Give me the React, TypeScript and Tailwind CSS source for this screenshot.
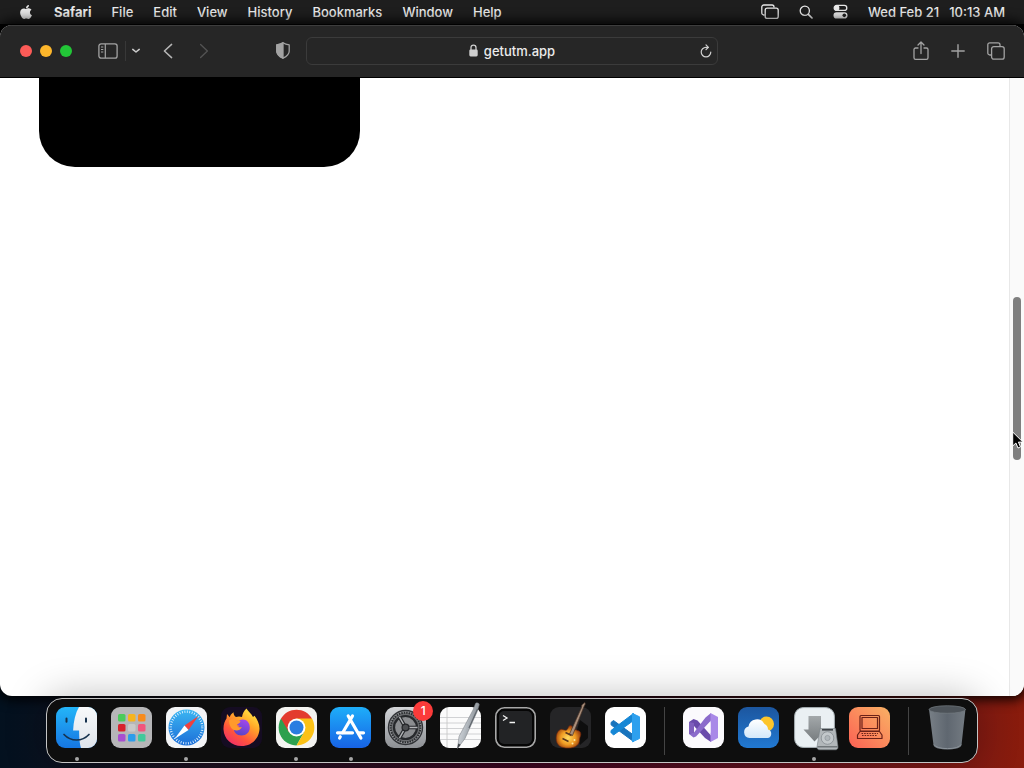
import type { ReactNode } from 'react';
import { FaApple } from 'react-icons/fa';

// =============================================================================
// DATA
// =============================================================================
const MENUS = ['File', 'Edit', 'View', 'History', 'Bookmarks', 'Window', 'Help'];

// Scroll position of the page, in percent of the track
const SCROLL = { top: 35.4, height: 26.4 };

// =============================================================================
// MENU BAR AND TOOLBAR ICONS
// =============================================================================
const StackIcon = () => (
  <svg width="18" height="16" viewBox="0 0 18 16" fill="none" stroke="#e8e8e8" strokeWidth="1.3">
    <path d="M3.6 11H2.8A2 2 0 0 1 .8 9V3A2 2 0 0 1 2.8 1H11a2 2 0 0 1 2 2v.6" />
    <rect x="4.2" y="4.2" width="13" height="10.2" rx="2" />
  </svg>
);

const SearchIcon = () => (
  <svg width="14" height="14" viewBox="0 0 14 14" fill="none" stroke="#e8e8e8" strokeLinecap="round">
    <circle cx="5.8" cy="5.8" r="4.6" strokeWidth="1.3" />
    <path d="m9.3 9.3 3.7 3.7" strokeWidth="1.7" />
  </svg>
);

const ControlCenterIcon = () => (
  <svg width="15" height="15" viewBox="0 0 15 15">
    <rect x="1.2" y="1.4" width="12.6" height="5" rx="2.5" fill="none" stroke="#e8e8e8" strokeWidth="1.3" />
    <circle cx="3.8" cy="3.9" r="2.6" fill="#e8e8e8" />
    <rect x=".5" y="8.2" width="14" height="6.3" rx="3.1" fill="#e8e8e8" />
    <circle cx="11.3" cy="11.35" r="1.8" fill="#1f1f1f" />
  </svg>
);

const SidebarIcon = () => (
  <svg width="20" height="16" viewBox="0 0 20 16" fill="none" stroke="#a3a3a3">
    <rect x=".9" y=".9" width="18.2" height="14.2" rx="2.2" strokeWidth="1.3" />
    <path d="M7.3 1v14" strokeWidth="1.2" />
    <path d="M3 4h2.3M3 6.5h2.3M3 9h2.3" />
  </svg>
);

const ChevronDownIcon = () => (
  <svg width="10" height="6" viewBox="0 0 10 6" fill="none" stroke="#c9c9c9" strokeWidth="1.6" strokeLinecap="round" strokeLinejoin="round">
    <path d="m1.8 1.4 3.2 2.6 3.2-2.6" />
  </svg>
);

const BackIcon = () => (
  <svg width="10" height="16" viewBox="0 0 10 16" fill="none" stroke="currentColor" strokeWidth="1.5" strokeLinecap="round" strokeLinejoin="round">
    <path d="M8.6 1.4 1.4 8l7.2 6.6" />
  </svg>
);

const ForwardIcon = () => (
  <svg width="10" height="16" viewBox="0 0 10 16" fill="none" stroke="currentColor" strokeWidth="1.4" strokeLinecap="round" strokeLinejoin="round">
    <path d="M1.6 1.6 8.4 8l-6.8 6.4" />
  </svg>
);

const ShieldIcon = () => (
  <svg width="14" height="17" viewBox="0 0 14 17" stroke="#a3a3a3" strokeWidth="1.3" strokeLinejoin="round">
    <path d="M7 .8c1.6 1.1 3.8 1.8 6.2 2v6.4c0 3-2.6 5.2-6.2 7-3.6-1.8-6.2-4-6.2-7V2.8C3.2 2.6 5.4 1.9 7 .8Z" fill="none" />
    <path d="M7 .8v15.4c-3.6-1.8-6.2-4-6.2-7V2.8C3.2 2.6 5.4 1.9 7 .8Z" fill="#a3a3a3" />
  </svg>
);

const LockIcon = () => (
  <svg width="9" height="13" viewBox="0 0 9 13">
    <path d="M2 6V3.6a2.5 2.5 0 0 1 5 0V6" fill="none" stroke="#cfcfcf" strokeWidth="1.3" />
    <rect x=".3" y="5.4" width="8.4" height="7" rx="1.3" fill="#cfcfcf" />
  </svg>
);

const ReloadIcon = () => (
  <svg width="12" height="14" viewBox="0 0 12 14" fill="none" stroke="#d0d0d0" strokeWidth="1.2" strokeLinecap="round" strokeLinejoin="round">
    <path d="M8.2 3.3H6a4.8 4.8 0 1 0 4.8 4.8" />
    <path d="M6 .9 8.4 3.3 6 5.7" />
  </svg>
);

const ShareIcon = () => (
  <svg width="16" height="20" viewBox="0 0 16 20" fill="none" stroke="#a3a3a3" strokeWidth="1.3" strokeLinecap="round" strokeLinejoin="round">
    <path d="M5 7H2.6A1.6 1.6 0 0 0 1 8.6v8.2a1.6 1.6 0 0 0 1.6 1.6h10.8a1.6 1.6 0 0 0 1.6-1.6V8.6A1.6 1.6 0 0 0 13.4 7H11" />
    <path d="M8 12.5V1.2M5 4l3-3 3 3" />
  </svg>
);

const PlusIcon = () => (
  <svg width="14" height="14" viewBox="0 0 14 14" stroke="#a3a3a3" strokeWidth="1.4" strokeLinecap="round">
    <path d="M7 .8v12.4M.8 7h12.4" />
  </svg>
);

const TabsIcon = () => (
  <svg width="18" height="18" viewBox="0 0 18 18" fill="none" stroke="#a3a3a3" strokeWidth="1.3">
    <path d="M4.4 13H2.8A2 2 0 0 1 .8 11V2.8a2 2 0 0 1 2-2H11a2 2 0 0 1 2 2v1.6" />
    <rect x="4.6" y="4.6" width="12.6" height="12.6" rx="2.2" />
  </svg>
);

const CursorIcon = () => (
  <svg width="12" height="19" viewBox="0 0 12 19" className="absolute bottom-2.5 -left-px">
    <path d="M.7 1v14l3.2-3 2.1 5 2.5-1.1-2.1-4.8h4.5Z" fill="#000" stroke="#fff" strokeWidth="1" />
  </svg>
);

// =============================================================================
// DOCK ICONS (41 x 41)
// =============================================================================
const Tile = ({ children }: { children: ReactNode }) => (
  <svg width="41" height="41" viewBox="0 0 41 41" className="block overflow-visible">
    {children}
  </svg>
);

const FinderIcon = () => (
  <Tile>
    <defs>
      <linearGradient id="finder" x1="0" y1="0" x2="0" y2="1">
        <stop offset="0" stopColor="#24b5f8" />
        <stop offset="1" stopColor="#1676e2" />
      </linearGradient>
      <linearGradient id="finderFace" x1="0" y1="0" x2="0" y2="1">
        <stop offset="0" stopColor="#f8f9fb" />
        <stop offset="1" stopColor="#dfe4ea" />
      </linearGradient>
    </defs>
    <rect width="41" height="41" rx="9" fill="url(#finder)" />
    <path d="M23 0h9a9 9 0 0 1 9 9v23a9 9 0 0 1-9 9h-7c-1.2-4-1.8-9-1.9-17.5h-6C17.5 14 19.5 6 23 0Z" fill="url(#finderFace)" />
    <path d="M10.5 11.5v3.2M30 11.5v3.2" stroke="#17324e" strokeWidth="2" strokeLinecap="round" />
    <path d="M8 27.5c7 7.3 18 7.3 25 0" fill="none" stroke="#17324e" strokeWidth="1.7" strokeLinecap="round" />
  </Tile>
);

const LAUNCHPAD_COLORS = ['#4bcb5b', '#f6b41f', '#f78b1d', '#d8222c', '#c9c9c9', '#f2557c', '#a84fd0', '#2d9cea', '#42c99b'];

const LaunchpadIcon = () => (
  <Tile>
    <rect width="41" height="41" rx="9" fill="#b6b6b8" />
    {LAUNCHPAD_COLORS.map((color, i) => (
      <rect key={color} x={7 + (i % 3) * 10} y={7 + Math.floor(i / 3) * 10} width="7.5" height="7.5" rx="1.6" fill={color} />
    ))}
  </Tile>
);

const SafariIcon = () => (
  <Tile>
    <defs>
      <linearGradient id="safari" x1="0" y1="0" x2="0" y2="1">
        <stop offset="0" stopColor="#3bb6f2" />
        <stop offset="1" stopColor="#1d6fd8" />
      </linearGradient>
    </defs>
    <rect width="41" height="41" rx="9" fill="#f3f4f6" />
    <circle cx="20.5" cy="20.5" r="18" fill="url(#safari)" />
    <circle cx="20.5" cy="20.5" r="15.8" fill="none" stroke="#e9f5ff" strokeWidth="2.4" strokeDasharray=".8 1.68" />
    <path d="m32.5 9-10 14-4-4.5Z" fill="#f0403d" />
    <path d="m8.5 32 10-13.5 4 4.5Z" fill="#fff" />
  </Tile>
);

const FirefoxIcon = () => (
  <Tile>
    <defs>
      <linearGradient id="firefox" x1=".85" y1="0" x2=".2" y2="1">
        <stop offset="0" stopColor="#fff04a" />
        <stop offset=".35" stopColor="#ffa928" />
        <stop offset=".7" stopColor="#ff543c" />
        <stop offset="1" stopColor="#ef2c6c" />
      </linearGradient>
      <linearGradient id="firefoxGlobe" x1=".7" y1="0" x2=".3" y2="1">
        <stop offset="0" stopColor="#a347ed" />
        <stop offset="1" stopColor="#5645c5" />
      </linearGradient>
    </defs>
    <rect width="41" height="41" rx="9" fill="#150c22" />
    <path d="M25.5 1.5c1.5 2.8 4.8 5 6.5 8.5l1.5-1.2c3.2 4.2 5.8 9.5 4.8 15.2-1.4 8.6-8.3 15-17.8 15C10.5 39 3 32 2.5 22.5 2.3 17 4 13.5 5.5 11.5L6 7l2.8 3.2c.5-2 1.5-3.5 3.7-5 0 2 .8 3.8 2.5 4.8 2-.7 4-.7 6 0 .5-3.5 2-6.5 4.5-8.5Z" fill="url(#firefox)" />
    <path d="M19 13c5.5-2 9.8 2 9.8 7.5 0 4.8-3.6 8-8.2 8-5 0-8-3.5-8-7.5 2 .5 4.2-.2 6.2-2.2-2-.2-3.2-1-3.7-2.8 1.4-.2 2.7-1.2 3.9-3Z" fill="url(#firefoxGlobe)" />
    <path d="M8 13.5c2.3-1.6 5-1.6 7-.4 1.3.7 3 1.2 4.6 1.2-.4 2-3.2 2.5-4 4.2 1.2 2 3.6 2 5.4 1.5-1.8 3.6-5.2 4-8 3-2.8-1.2-4.6-4-5-9.5Z" fill="#ff9a2b" />
  </Tile>
);

const ChromeIcon = () => (
  <Tile>
    <rect width="41" height="41" rx="9" fill="#f3f3f1" />
    <path d="m20.5 20.5 7.7 4.5-7.7 13.4A17.9 17.9 0 0 1 5 11.6Z" fill="#2da04e" />
    <path d="M20.5 11.6H36L20.5 20.5 12.8 25 5 11.6a17.9 17.9 0 0 1 31 0Z" fill="#e33b2e" />
    <path d="M20.5 11.6H36a17.9 17.9 0 0 1-15.5 26.8L28.2 25Z" fill="#fbc116" />
    <circle cx="20.5" cy="20.5" r="8.9" fill="#fff" />
    <circle cx="20.5" cy="20.5" r="7" fill="#2a7de1" />
  </Tile>
);

const AppStoreIcon = () => (
  <Tile>
    <defs>
      <linearGradient id="appStore" x1="0" y1="0" x2="0" y2="1">
        <stop offset="0" stopColor="#1eaef9" />
        <stop offset="1" stopColor="#1763e6" />
      </linearGradient>
    </defs>
    <rect width="41" height="41" rx="9" fill="url(#appStore)" />
    <g stroke="#fff" strokeWidth="3.2" strokeLinecap="round">
      <path d="m22.5 9-9.7 16.5M10.3 29.8 9.6 31M18.2 9l12.7 22" />
      <path d="M7.5 25.8h15M28.5 25.8h5" />
    </g>
  </Tile>
);

const SettingsIcon = () => (
  <Tile>
    <defs>
      <linearGradient id="settings" x1="0" y1="0" x2="0" y2="1">
        <stop offset="0" stopColor="#d3d5d8" />
        <stop offset="1" stopColor="#8d9094" />
      </linearGradient>
    </defs>
    <rect width="41" height="41" rx="9" fill="url(#settings)" />
    <circle cx="20.5" cy="20.5" r="17" fill="#9a9c9f" stroke="#303236" strokeWidth="1.4" />
    <circle cx="20.5" cy="20.5" r="14.8" fill="#6a6c6f" stroke="#2a2c2f" strokeWidth="2" strokeDasharray="1.5 1" />
    <circle cx="20.5" cy="20.5" r="11.5" fill="#8b8d90" stroke="#27292c" strokeWidth="2.2" />
    <path d="M20.5 20.5h11M20.5 20.5 15 11M20.5 20.5 15 30" stroke="#27292c" strokeWidth="3.6" />
    <path d="M20.5 20.5h12M20.5 20.5l-6-10.5M20.5 20.5l-6 10.5" stroke="#b2b4b7" strokeWidth="1.5" />
    <circle cx="20.5" cy="20.5" r="3.4" fill="#4c4e51" stroke="#25272a" strokeWidth="1.3" />
  </Tile>
);

const TextEditIcon = () => (
  <Tile>
    <defs>
      <linearGradient id="pen" x1="0" y1="0" x2="1" y2="0.5">
        <stop offset="0" stopColor="#eef0f2" />
        <stop offset=".5" stopColor="#b9bfc5" />
        <stop offset="1" stopColor="#70767c" />
      </linearGradient>
    </defs>
    <rect width="41" height="41" rx="9" fill="#fbfbfb" />
    <path d="M0 10.5h41M0 16h41M0 21.5h41M0 27h41M0 32.5h41" stroke="#c6c8ca" strokeWidth=".8" />
    <path d="M7 1v39" stroke="#c4c4c4" strokeWidth=".8" />
    <path d="M35.5-3.5c1-1.5 4-.3 3.8 1.3L37 5 25 31.5 17.5 41.5l1.5-12L33 3Z" fill="url(#pen)" stroke="#74797f" strokeWidth=".5" />
    <path d="m18.2 36.5-1 5.5 3.5-4.2Z" fill="#42464b" />
    <path d="M37.5 2 29 21" stroke="#5f656c" strokeWidth="1.1" />
  </Tile>
);

const TerminalIcon = () => (
  <Tile>
    <rect x=".8" y=".8" width="39.4" height="39.4" rx="8.6" fill="#050505" stroke="#a8a8a8" strokeWidth="1.6" />
    <rect x="4" y="4" width="33" height="33" rx="5" fill="#222325" />
    <path d="m8 8.5 4 2.5-4 2.5M14.5 15.5H20" fill="none" stroke="#f4f4f4" strokeWidth="1.3" />
  </Tile>
);

const GarageBandIcon = () => (
  <Tile>
    <defs>
      <radialGradient id="guitar" cx=".48" cy=".55" r=".6">
        <stop offset="0" stopColor="#ffdc62" />
        <stop offset=".5" stopColor="#f09a22" />
        <stop offset="1" stopColor="#7e2409" />
      </radialGradient>
    </defs>
    <rect width="41" height="41" rx="9" fill="#252527" />
    <path d="m30 13-4 13 4 12 8-7V19Z" fill="#0e0e0e" />
    <path d="M9.5 23c2.5-2 4.5 1 7 0 2.2-1 1.5-4.5 4-4.5 1.8 0 2 2.2 3.5 3.5 1.8 1.5 5.5 1 6.5 3.5s-.5 4-.8 6c-.3 2.5-.2 5-2.7 7-4 3.3-13 3.5-17.5.5-4.5-3.2-4.5-12.5 0-16Z" fill="url(#guitar)" stroke="#6e250b" strokeWidth=".6" />
    <path d="m19.5 27 12-26.5.3-2.5 3-2.5.5 1.5-1.5 3L22.5 28.5Z" fill="#a88f7c" stroke="#4a3428" strokeWidth=".7" />
    <path d="m15.5 25.5 6 3M12.5 31.5l6 3" stroke="#59351c" strokeWidth="1.5" />
    <circle cx="24.5" cy="33" r="1" fill="#fbe7a8" />
    <circle cx="22.5" cy="36.5" r="1" fill="#fbe7a8" />
  </Tile>
);

const VsCodeIcon = () => (
  <Tile>
    <rect width="41" height="41" rx="9" fill="#fff" />
    <path d="m6 15.5 2.5-2L28.5 28v6.5L6.2 18Z" fill="#1874bd" stroke="#1874bd" strokeWidth="1" strokeLinejoin="round" />
    <path d="M28.5 6.5V13.5L8.5 28 6 25.5v-2Z" fill="#1687d5" stroke="#1687d5" strokeWidth="1" strokeLinejoin="round" />
    <path d="m27.5 6.5 7 3.3v21.7l-7 3.3Z" fill="#2da0ee" stroke="#2da0ee" strokeLinejoin="round" />
  </Tile>
);

const VisualStudioIcon = () => (
  <Tile>
    <rect width="41" height="41" rx="9" fill="#fbfafd" />
    <path d="m6 15 4.5-3 4 1.5L28 28.5v6.5L22 31 11 19v8L6 27Z" fill="#6a4bab" />
    <path d="m6 15 5 1v9.5L6 27Z" fill="#7f5fbd" />
    <path d="M28 6v7.5L13 29.5 10.5 30.5 6 27 11 25.5 22.5 10.5Z" fill="#8b6bcb" />
    <path d="m27.5 6 7.5 4v21l-7.5 4Z" fill="#a989e8" />
    <path d="M27.5 15v11l-5.5-5.5Z" fill="#fbfafd" />
  </Tile>
);

const WeatherIcon = () => (
  <Tile>
    <defs>
      <linearGradient id="weather" x1="0" y1="0" x2="0" y2="1">
        <stop offset="0" stopColor="#1c569f" />
        <stop offset="1" stopColor="#2179d2" />
      </linearGradient>
      <linearGradient id="cloud" x1="0" y1="0" x2="0" y2="1">
        <stop offset="0" stopColor="#fff" />
        <stop offset="1" stopColor="#d3e8fa" />
      </linearGradient>
    </defs>
    <rect width="41" height="41" rx="9" fill="url(#weather)" />
    <circle cx="28.5" cy="17" r="7.5" fill="#fdc52a" />
    <path d="M11.5 31a5.8 5.8 0 0 1-1-11.4 8.5 8.5 0 0 1 16-2.5 6 6 0 0 1 3.5 5.4 4.4 4.4 0 0 1 0 8.5Z" fill="url(#cloud)" />
  </Tile>
);

const InstallerIcon = () => (
  <Tile>
    <defs>
      <linearGradient id="arrow" x1="0" y1="0" x2="0" y2="1">
        <stop offset="0" stopColor="#a3a8aa" />
        <stop offset="1" stopColor="#777c7f" />
      </linearGradient>
    </defs>
    <rect x=".6" y=".6" width="39.8" height="39.8" rx="8.6" fill="#eaf0f3" stroke="#a6afb3" strokeWidth="1" />
    <path d="M14.5 9H27v13.5h5L20.5 34.5 9.5 22.5h5Z" fill="url(#arrow)" />
    <path d="M26 21.5h15.5L44 40c0 1.8-1 2.8-2.5 2.8H25.5c-1.6 0-2.5-1-2.5-2.8Z" fill="#b2b7ba" stroke="#777f84" strokeWidth=".6" />
    <path d="M28 22.8h11" stroke="#3d4246" strokeWidth="1.6" />
    <circle cx="33.5" cy="31" r="6.3" fill="#c3c8cb" stroke="#858c91" strokeWidth=".8" />
    <circle cx="33.5" cy="31" r="2.6" fill="#b0b6ba" stroke="#8a9196" strokeWidth=".6" />
    <path d="M23.5 39.8H43.5" stroke="#62686c" strokeWidth="1.2" />
  </Tile>
);

const LaptopIcon = () => (
  <Tile>
    <defs>
      <linearGradient id="laptop" x1="1" y1="0" x2="0" y2="1">
        <stop offset="0" stopColor="#f8b164" />
        <stop offset=".5" stopColor="#fb8a5c" />
        <stop offset="1" stopColor="#fb6053" />
      </linearGradient>
    </defs>
    <rect width="41" height="41" rx="9" fill="url(#laptop)" />
    <g fill="none" stroke="#6b2118" strokeWidth="1.2" strokeLinejoin="round">
      <rect x="11" y="8.5" width="19.5" height="15.5" rx="1" />
      <rect x="13" y="10.5" width="15.5" height="11" />
      <path d="M11 24.5 8.5 28v3.5H33V28l-2.5-3.5Z" />
      <path d="M12.5 26.5h16.5M13 28.5h15.5" strokeDasharray="1.6 1" />
    </g>
  </Tile>
);

const TrashIcon = () => (
  <Tile>
    <defs>
      <linearGradient id="trash" x1="0" y1="0" x2="1" y2="0">
        <stop offset="0" stopColor="#787f86" />
        <stop offset=".5" stopColor="#5f6770" />
        <stop offset="1" stopColor="#747b82" />
      </linearGradient>
    </defs>
    <path d="M2 2h36.5L34.5 38c-.4 6-27.5 6-28 0Z" fill="url(#trash)" />
    <path d="M7 37.5c2 5.5 25 5.5 27 0" fill="none" stroke="#8b939a" strokeWidth="1" />
    <ellipse cx="20.25" cy="2.5" rx="18.2" ry="3.8" fill="#4d5359" stroke="#747b81" strokeWidth=".7" />
  </Tile>
);

type DockApp = { name: string; icon: ReactNode; running?: boolean; badge?: number };

const PINNED_APPS: DockApp[] = [
  { name: 'Finder', icon: <FinderIcon />, running: true },
  { name: 'Launchpad', icon: <LaunchpadIcon /> },
  { name: 'Safari', icon: <SafariIcon />, running: true },
  { name: 'Firefox', icon: <FirefoxIcon /> },
  { name: 'Chrome', icon: <ChromeIcon />, running: true },
  { name: 'App Store', icon: <AppStoreIcon />, running: true },
  { name: 'System Settings', icon: <SettingsIcon />, badge: 1 },
  { name: 'TextEdit', icon: <TextEditIcon /> },
  { name: 'Terminal', icon: <TerminalIcon /> },
  { name: 'GarageBand', icon: <GarageBandIcon /> },
  { name: 'Visual Studio Code', icon: <VsCodeIcon /> },
];

const RECENT_APPS: DockApp[] = [
  { name: 'Visual Studio', icon: <VisualStudioIcon /> },
  { name: 'Weather', icon: <WeatherIcon /> },
  { name: 'Installer', icon: <InstallerIcon />, running: true },
  { name: 'Laptop', icon: <LaptopIcon /> },
];

// =============================================================================
// SECTIONS
// =============================================================================
const MenuBar = () => (
  <header className="flex h-6 shrink-0 items-center justify-between bg-[#1e1e1e] pr-[19px] pb-px pl-[18px]">
    <nav className="flex items-center gap-5">
      <button aria-label="Apple menu" className="text-[#e8e8e8]">
        <FaApple size={16} />
      </button>
      <button className="font-bold">Safari</button>
      {MENUS.map((menu) => (
        <button key={menu}>{menu}</button>
      ))}
    </nav>
    <div className="flex items-center gap-5">
      <button aria-label="Stage Manager"><StackIcon /></button>
      <button aria-label="Spotlight"><SearchIcon /></button>
      <button aria-label="Control Center"><ControlCenterIcon /></button>
      <button className="flex gap-2.5">
        <span>Wed Feb 21</span>
        <span>10:13 AM</span>
      </button>
    </div>
  </header>
);

const Toolbar = () => (
  <div className="grid h-[53px] shrink-0 grid-cols-[1fr_412px_1fr] items-center border-t border-b border-t-[#3d3d3d] border-b-black bg-[#262626] pb-0.5">
    <div className="flex items-center justify-between pr-4 pl-5">
      <div className="flex items-center">
        <div className="flex gap-2">
          <button aria-label="Close" className="size-3 rounded-full bg-[#fc5b57]" />
          <button aria-label="Minimize" className="size-3 rounded-full bg-[#fdb62b]" />
          <button aria-label="Zoom" className="size-3 rounded-full bg-[#22c637]" />
        </div>
        <button aria-label="Sidebar" className="ml-[26px]"><SidebarIcon /></button>
        <span className="ml-[7px] h-5 w-px bg-[#383838]" />
        <button aria-label="Tab groups" className="ml-[5px]"><ChevronDownIcon /></button>
        <button aria-label="Back" className="ml-[22px] text-[#b5b5b5]"><BackIcon /></button>
        <button aria-label="Forward" className="ml-[26px] text-[#525252]"><ForwardIcon /></button>
      </div>
      <button aria-label="Privacy report"><ShieldIcon /></button>
    </div>

    <form className="relative flex h-7 items-center justify-center gap-1.5 rounded-md border border-[#3b3b3b]">
      <LockIcon />
      <input
        aria-label="Address"
        defaultValue="getutm.app"
        className="field-sizing-content bg-transparent outline-none"
      />
      <button type="button" aria-label="Reload" className="absolute right-[5px]"><ReloadIcon /></button>
    </form>

    <div className="flex items-center justify-end gap-[22px] pr-[19px]">
      <button aria-label="Share"><ShareIcon /></button>
      <button aria-label="New tab"><PlusIcon /></button>
      <button aria-label="Tab overview"><TabsIcon /></button>
    </div>
  </div>
);

const Page = () => (
  <div className="flex min-h-0 flex-1">
    <main className="flex-1 pl-[39px]">
      <div className="h-[89px] w-[321px] rounded-b-[36px] bg-black" />
    </main>
    <div className="w-[15px] border-l border-[#e8e8e8] bg-[#fafafa] pl-[3px]">
      <div style={{ height: `${SCROLL.top}%` }} />
      <div className="relative w-2 rounded-full bg-[#7f7f7f]" style={{ height: `${SCROLL.height}%` }}>
        <CursorIcon />
      </div>
    </div>
  </div>
);

const DockItem = ({ app }: { app: DockApp }) => (
  <button aria-label={app.name} className="relative flex w-[41px] flex-col items-center gap-[9px]">
    {app.icon}
    <span className={app.running ? 'size-1 rounded-full bg-[#a6a6a6]' : 'size-1'} />
    {app.badge && (
      <span className="absolute -top-1.5 -right-[7px] flex size-5 items-center justify-center rounded-full bg-[#fb3b3a] text-xs text-white">
        {app.badge}
      </span>
    )}
  </button>
);

const Dock = () => (
  <footer className="z-10 mt-0.5 mb-[5px] flex h-[65px] shrink-0 gap-[18px] self-center rounded-2xl border border-[#c5c5c5] bg-[#0e0e0e] px-[9px] pt-2 shadow-[0_0_40px_rgba(0,0,0,0.28)]">
    <div className="flex w-[590px] justify-between">
      {PINNED_APPS.map((app) => (
        <DockItem key={app.name} app={app} />
      ))}
    </div>
    <span className="h-12 w-px bg-[#444]" />
    <div className="flex w-[207px] justify-between">
      {RECENT_APPS.map((app) => (
        <DockItem key={app.name} app={app} />
      ))}
    </div>
    <span className="h-12 w-px bg-[#444]" />
    <DockItem app={{ name: 'Trash', icon: <TrashIcon /> }} />
  </footer>
);

export default function App() {
  return (
    <div className="flex h-screen flex-col overflow-hidden bg-linear-to-r from-[#03111f] via-[#3a0520] to-[#8a1c0c] font-['Inter','Liberation_Sans',sans-serif] text-[13px] leading-4 font-medium text-[#ececec]">
      <MenuBar />
      <div className="flex min-h-0 flex-1 flex-col bg-linear-to-b from-black from-50% to-transparent to-50% pt-px">
        <div className="flex min-h-0 flex-1 flex-col overflow-hidden rounded-xl bg-white shadow-[0_0_12px_4px_rgba(0,0,0,0.9)]">
          <Toolbar />
          <Page />
        </div>
      </div>
      <Dock />
    </div>
  );
}
